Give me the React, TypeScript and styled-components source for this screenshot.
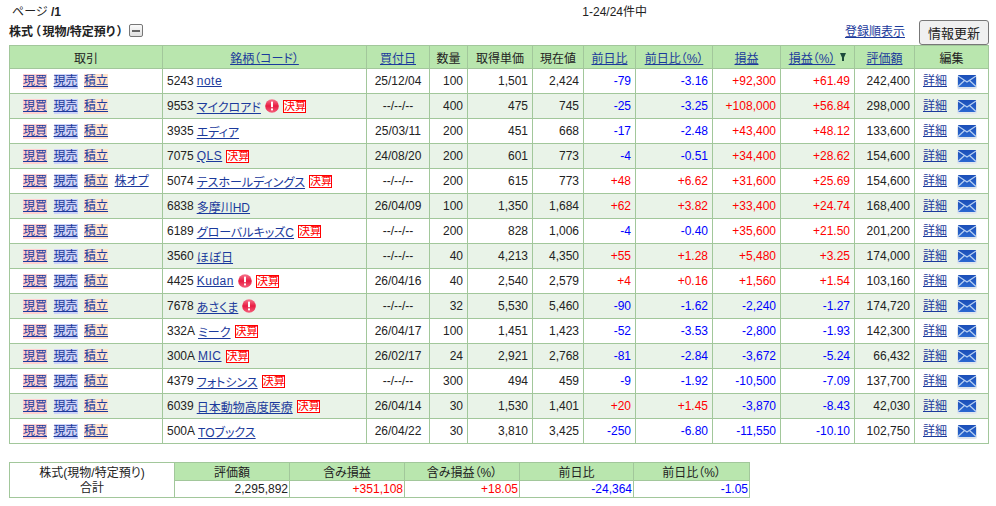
import React from "react"
import styled, { createGlobalStyle } from "styled-components"

const GlobalStyle = createGlobalStyle`
  html, body { margin: 0; padding: 0; background: #fff; }
  body {
    font-family: "Liberation Sans", "Noto Sans CJK JP", sans-serif;
    font-size: 12px;
    color: #222;
    font-feature-settings: "palt";
  }
`

const Page = styled.div`
  width: 980px;
  padding-left: 9px;
`

const PagerRow = styled.div`
  display: flex;
  height: 19px;
  align-items: center;
  padding: 1px 0 0 3px;
  box-sizing: border-box;
`

const PageCount = styled.span`
  flex: 1;
`

const ItemCount = styled.span`
  margin-right: 342px;
`

const SectionRow = styled.div`
  display: flex;
  align-items: center;
  height: 26px;
`

const SectionTitle = styled.h2`
  margin: 0 0 4px;
  font-size: 12px;
  font-weight: bold;
  color: #222;
`

const Paren = styled.span`
  margin: 0 1.75px;
`

const Collapse = styled.span`
  display: block;
  position: relative;
  width: 12px;
  height: 11px;
  margin: 0 0 4px 4px;
  border: 1px solid #777;
  border-radius: 2px;
  background: linear-gradient(#fafafa, #e0e0e0);
  &::after {
    content: "";
    position: absolute;
    left: 2px;
    right: 2px;
    top: 5px;
    height: 2px;
    background: #666;
  }
`

const Link = styled.a`
  color: #1b3a9c;
  text-decoration: underline;
  cursor: pointer;
`

const OrderLink = styled(Link)`
  margin: 0 14px 4px auto;
`

const RefreshButton = styled.button`
  width: 70px;
  height: 25px;
  padding: 0;
  font: inherit;
  font-size: 13px;
  color: #222;
  background: #f0f0f0;
  border: 1px solid #777;
  border-radius: 3px;
`

const Grid = styled.table`
  border-collapse: collapse;
  table-layout: fixed;
  width: 979px;
`

const Head = styled.th`
  height: 22px;
  padding: 0;
  font-weight: normal;
  text-align: center;
  background: #b9e6ae;
  border: 1px solid #a2c79b;
`

const Cell = styled.td<{ $align?: string; $tone?: string }>`
  height: 24px;
  padding: 0 4px;
  white-space: nowrap;
  text-align: ${(p) => p.$align || "right"};
  color: ${(p) => (p.$tone === "up" ? "#ff0000" : p.$tone === "down" ? "#0000ff" : "#222")};
  border: 1px solid #a2c79b;
`

const Row = styled.tr<{ $even: boolean }>`
  background: ${(p) => (p.$even ? "#e9f3e8" : "#fff")};
`

const TradeLinks = styled.div`
  display: flex;
  gap: 6.5px;
  padding-left: 9px;
`

const TradeLink = styled(Link)<{ $bg?: string }>`
  line-height: 15px;
  background: ${(p) => p.$bg || "transparent"};
`

const NameWrap = styled.div`
  display: flex;
  align-items: center;
`

const Code = styled.span`
  margin-right: 3px;
`

const NameLink = styled(Link)<{ $latin: boolean }>`
  letter-spacing: ${(p) => (p.$latin ? "0.5px" : "0")};
`

const Earnings = styled.span`
  display: block;
  width: 21px;
  height: 11px;
  line-height: 11px;
  margin-left: 4px;
  font-size: 11px;
  text-align: center;
  color: #f00;
  background: #fff;
  border: 1px solid #f00;
`

const AlertIcon = styled.svg`
  width: 14px;
  height: 14px;
  margin-left: 4px;
`

const EditWrap = styled.div`
  display: flex;
  align-items: center;
  padding-left: 4px;
`

const EditLink = styled(Link)`
  line-height: 15px;
`

const MailIcon = styled.svg`
  width: 20px;
  height: 14px;
  margin-left: 10px;
  margin-top: 2px;
`

const SortMark = styled.svg`
  width: 6px;
  height: 8px;
  margin-left: 5px;
  vertical-align: 2px;
`

const Summary = styled.table`
  border-collapse: collapse;
  table-layout: fixed;
  width: 740px;
  margin-top: 18px;
`

const SummaryLabel = styled.td`
  padding: 2px 0 0;
  text-align: center;
  line-height: 15px;
  border: 1px solid #a2c79b;
`

const SummaryHead = styled(Head)`
  height: 17px;
`

const SummaryCell = styled(Cell)`
  height: 16px;
  padding: 0 1px;
`

const Alert = () => (
  <AlertIcon viewBox="0 0 14 14">
    <defs>
      <linearGradient id="alertFill" x1="0" y1="0" x2="0" y2="1">
        <stop offset="0" stopColor="#f7788f" />
        <stop offset="0.5" stopColor="#e81c42" />
        <stop offset="1" stopColor="#f4607c" />
      </linearGradient>
    </defs>
    <circle cx="7" cy="7" r="6.8" fill="url(#alertFill)" />
    <rect x="6" y="2.6" width="2" height="5.6" fill="#fff" />
    <rect x="6" y="9.4" width="2" height="2" fill="#fff" />
  </AlertIcon>
)

const Mail = () => (
  <MailIcon viewBox="0 0 20 14">
    <defs>
      <linearGradient id="mailFill" x1="0" y1="0" x2="0" y2="1">
        <stop offset="0" stopColor="#1c4fb8" />
        <stop offset="1" stopColor="#2a68d0" />
      </linearGradient>
    </defs>
    <rect x="0" y="1" width="20" height="13" rx="2" fill="#dfe5ec" />
    <rect x="1" y="0" width="18" height="12" fill="url(#mailFill)" />
    <path d="M1 1l9 6 9-6M1 11.5l6.5-6M19 11.5l-6.5-6" fill="none" stroke="#b9d0f2" strokeWidth="1.2" />
  </MailIcon>
)

const SortArrow = () => (
  <SortMark viewBox="0 0 6 8">
    <path d="M0 0h6L4 4.5V8H2V4.5z" fill="#1d4a3c" />
  </SortMark>
)

type Stock = {
  code: string
  name: string
  alert?: boolean
  earn?: boolean
  option?: boolean
  date: string
  qty: string
  cost: string
  price: string
  diff: string
  diffPct: string
  gain: string
  gainPct: string
  value: string
}

const stocks: Stock[] = [
  { code: "5243", name: "note", date: "25/12/04", qty: "100", cost: "1,501", price: "2,424", diff: "-79", diffPct: "-3.16", gain: "+92,300", gainPct: "+61.49", value: "242,400" },
  { code: "9553", name: "マイクロアド", alert: true, earn: true, date: "--/--/--", qty: "400", cost: "475", price: "745", diff: "-25", diffPct: "-3.25", gain: "+108,000", gainPct: "+56.84", value: "298,000" },
  { code: "3935", name: "エディア", date: "25/03/11", qty: "200", cost: "451", price: "668", diff: "-17", diffPct: "-2.48", gain: "+43,400", gainPct: "+48.12", value: "133,600" },
  { code: "7075", name: "QLS", earn: true, date: "24/08/20", qty: "200", cost: "601", price: "773", diff: "-4", diffPct: "-0.51", gain: "+34,400", gainPct: "+28.62", value: "154,600" },
  { code: "5074", name: "テスホールディングス", earn: true, option: true, date: "--/--/--", qty: "200", cost: "615", price: "773", diff: "+48", diffPct: "+6.62", gain: "+31,600", gainPct: "+25.69", value: "154,600" },
  { code: "6838", name: "多摩川HD", date: "26/04/09", qty: "100", cost: "1,350", price: "1,684", diff: "+62", diffPct: "+3.82", gain: "+33,400", gainPct: "+24.74", value: "168,400" },
  { code: "6189", name: "グローバルキッズC", earn: true, date: "--/--/--", qty: "200", cost: "828", price: "1,006", diff: "-4", diffPct: "-0.40", gain: "+35,600", gainPct: "+21.50", value: "201,200" },
  { code: "3560", name: "ほぼ日", date: "--/--/--", qty: "40", cost: "4,213", price: "4,350", diff: "+55", diffPct: "+1.28", gain: "+5,480", gainPct: "+3.25", value: "174,000" },
  { code: "4425", name: "Kudan", alert: true, earn: true, date: "26/04/16", qty: "40", cost: "2,540", price: "2,579", diff: "+4", diffPct: "+0.16", gain: "+1,560", gainPct: "+1.54", value: "103,160" },
  { code: "7678", name: "あさくま", alert: true, date: "--/--/--", qty: "32", cost: "5,530", price: "5,460", diff: "-90", diffPct: "-1.62", gain: "-2,240", gainPct: "-1.27", value: "174,720" },
  { code: "332A", name: "ミーク", earn: true, date: "26/04/17", qty: "100", cost: "1,451", price: "1,423", diff: "-52", diffPct: "-3.53", gain: "-2,800", gainPct: "-1.93", value: "142,300" },
  { code: "300A", name: "MIC", earn: true, date: "26/02/17", qty: "24", cost: "2,921", price: "2,768", diff: "-81", diffPct: "-2.84", gain: "-3,672", gainPct: "-5.24", value: "66,432" },
  { code: "4379", name: "フォトシンス", earn: true, date: "--/--/--", qty: "300", cost: "494", price: "459", diff: "-9", diffPct: "-1.92", gain: "-10,500", gainPct: "-7.09", value: "137,700" },
  { code: "6039", name: "日本動物高度医療", earn: true, date: "26/04/14", qty: "30", cost: "1,530", price: "1,401", diff: "+20", diffPct: "+1.45", gain: "-3,870", gainPct: "-8.43", value: "42,030" },
  { code: "500A", name: "TOブックス", date: "26/04/22", qty: "30", cost: "3,810", price: "3,425", diff: "-250", diffPct: "-6.80", gain: "-11,550", gainPct: "-10.10", value: "102,750" },
]

const columns = [153, 204, 63, 38, 65, 51, 52, 77, 68, 74, 60, 74]
const summaryColumns = [165, 115, 115, 115, 114, 116]

const tone = (v: string) => (v[0] === "+" ? "up" : "down")

export default function App() {
  return (
    <Page>
      <GlobalStyle />
      <PagerRow>
        <PageCount>ページ <b>/1</b></PageCount>
        <ItemCount>1-24/24件中</ItemCount>
      </PagerRow>
      <SectionRow>
        <SectionTitle>株式<Paren>（</Paren>現物/特定預り<Paren>）</Paren></SectionTitle>
        <Collapse />
        <OrderLink>登録順表示</OrderLink>
        <RefreshButton>情報更新</RefreshButton>
      </SectionRow>
      <Grid>
        <colgroup>
          {columns.map((w, i) => (
            <col key={i} width={w} />
          ))}
        </colgroup>
        <thead>
          <tr>
            <Head>取引</Head>
            <Head><Link>銘柄（コード）</Link></Head>
            <Head><Link>買付日</Link></Head>
            <Head>数量</Head>
            <Head>取得単価</Head>
            <Head>現在値</Head>
            <Head><Link>前日比</Link></Head>
            <Head><Link>前日比（%）</Link></Head>
            <Head><Link>損益</Link></Head>
            <Head><Link>損益（%）</Link><SortArrow /></Head>
            <Head><Link>評価額</Link></Head>
            <Head>編集</Head>
          </tr>
        </thead>
        <tbody>
          {stocks.map((s, i) => (
            <Row key={s.code} $even={i % 2 === 1}>
              <Cell $align="left">
                <TradeLinks>
                  <TradeLink $bg="#ffcfcf">現買</TradeLink>
                  <TradeLink $bg="#cdd2f7">現売</TradeLink>
                  <TradeLink $bg="#ffe2cc">積立</TradeLink>
                  {s.option && <TradeLink>株オプ</TradeLink>}
                </TradeLinks>
              </Cell>
              <Cell $align="left">
                <NameWrap>
                  <Code>{s.code}</Code>
                  <NameLink $latin={/^[A-Za-z]+$/.test(s.name)}>{s.name}</NameLink>
                  {s.alert && <Alert />}
                  {s.earn && <Earnings>決算</Earnings>}
                </NameWrap>
              </Cell>
              <Cell $align="center">{s.date}</Cell>
              <Cell>{s.qty}</Cell>
              <Cell>{s.cost}</Cell>
              <Cell>{s.price}</Cell>
              <Cell $tone={tone(s.diff)}>{s.diff}</Cell>
              <Cell $tone={tone(s.diffPct)}>{s.diffPct}</Cell>
              <Cell $tone={tone(s.gain)}>{s.gain}</Cell>
              <Cell $tone={tone(s.gainPct)}>{s.gainPct}</Cell>
              <Cell>{s.value}</Cell>
              <Cell $align="left">
                <EditWrap>
                  <EditLink>詳細</EditLink>
                  <Mail />
                </EditWrap>
              </Cell>
            </Row>
          ))}
        </tbody>
      </Grid>
      <Summary>
        <colgroup>
          {summaryColumns.map((w, i) => (
            <col key={i} width={w} />
          ))}
        </colgroup>
        <tbody>
          <tr>
            <SummaryLabel rowSpan={2}>
              株式(現物/特定預り)
              <br />
              合計
            </SummaryLabel>
            <SummaryHead>評価額</SummaryHead>
            <SummaryHead>含み損益</SummaryHead>
            <SummaryHead>含み損益（%）</SummaryHead>
            <SummaryHead>前日比</SummaryHead>
            <SummaryHead>前日比（%）</SummaryHead>
          </tr>
          <tr>
            <SummaryCell>2,295,892</SummaryCell>
            <SummaryCell $tone="up">+351,108</SummaryCell>
            <SummaryCell $tone="up">+18.05</SummaryCell>
            <SummaryCell $tone="down">-24,364</SummaryCell>
            <SummaryCell $tone="down">-1.05</SummaryCell>
          </tr>
        </tbody>
      </Summary>
    </Page>
  )
}
